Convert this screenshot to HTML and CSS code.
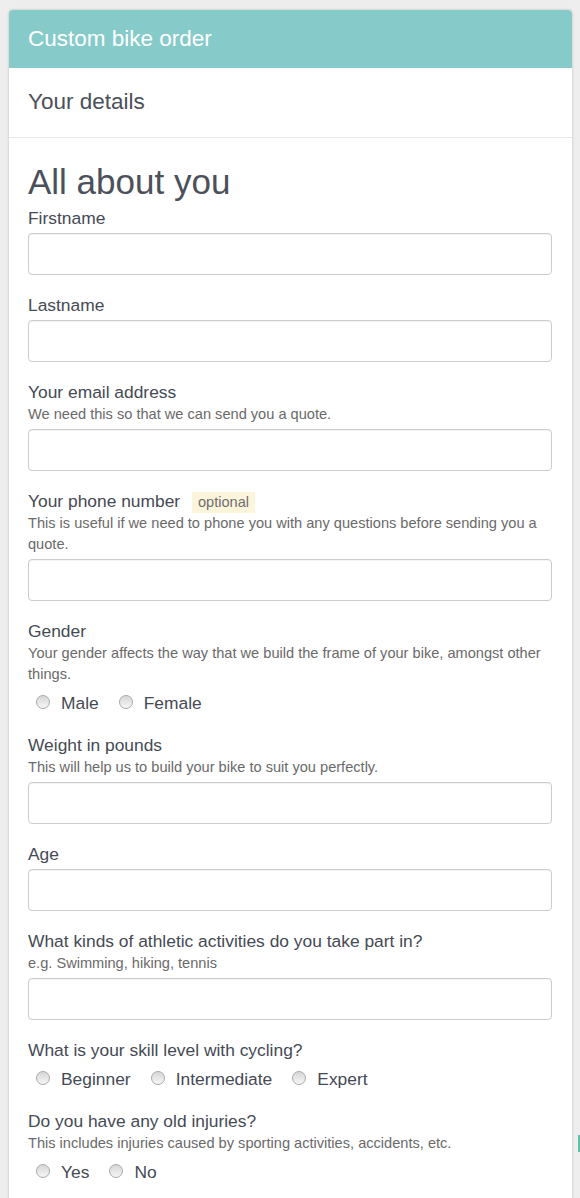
FILE: index.html
```html
<!DOCTYPE html>
<html lang="en">
<head>
<meta charset="utf-8">
<title>Custom bike order</title>
<link rel="stylesheet" href="styles.css">
</head>
<body>
<div class="card">
  <div class="card-header">Custom bike order</div>
  <div class="step-title">Your details</div>
  <form class="card-body">
    <h1 class="section-title">All about you</h1>

    <div class="group">
      <label class="label">Firstname</label>
      <input class="input" type="text">
    </div>

    <div class="group">
      <label class="label">Lastname</label>
      <input class="input" type="text">
    </div>

    <div class="group">
      <label class="label">Your email address</label>
      <p class="help">We need this so that we can send you a quote.</p>
      <input class="input" type="text">
    </div>

    <div class="group">
      <label class="label">Your phone number <span class="badge">optional</span></label>
      <p class="help">This is useful if we need to phone you with any questions before sending you a quote.</p>
      <input class="input" type="text">
    </div>

    <div class="group">
      <label class="label">Gender</label>
      <p class="help">Your gender affects the way that we build the frame of your bike, amongst other things.</p>
      <div class="radios">
        <label class="radio"><input type="radio" name="gender"><span>Male</span></label>
        <label class="radio"><input type="radio" name="gender"><span>Female</span></label>
      </div>
    </div>

    <div class="group">
      <label class="label">Weight in pounds</label>
      <p class="help">This will help us to build your bike to suit you perfectly.</p>
      <input class="input" type="text">
    </div>

    <div class="group">
      <label class="label">Age</label>
      <input class="input" type="text">
    </div>

    <div class="group">
      <label class="label">What kinds of athletic activities do you take part in?</label>
      <p class="help">e.g. Swimming, hiking, tennis</p>
      <input class="input" type="text">
    </div>

    <div class="group">
      <label class="label">What is your skill level with cycling?</label>
      <div class="radios">
        <label class="radio"><input type="radio" name="skill"><span>Beginner</span></label>
        <label class="radio"><input type="radio" name="skill"><span>Intermediate</span></label>
        <label class="radio"><input type="radio" name="skill"><span>Expert</span></label>
      </div>
    </div>

    <div class="group">
      <label class="label">Do you have any old injuries?</label>
      <p class="help">This includes injuries caused by sporting activities, accidents, etc.</p>
      <div class="radios">
        <label class="radio"><input type="radio" name="injuries"><span>Yes</span></label>
        <label class="radio"><input type="radio" name="injuries"><span>No</span></label>
      </div>
    </div>
  </form>
</div>
<div class="side-tab"></div>
</body>
</html>
```

FILE: styles.css
```css
html, body {
  margin: 0;
  padding: 0;
}
body {
  background: #eeeeee;
  font-family: "Liberation Sans", Arial, sans-serif;
  color: #454a54;
  padding: 10px 8px 0 9px;
  overflow: hidden;
}
.card {
  width: 563px;
  background: #ffffff;
  border-radius: 4px 4px 0 0;
  box-shadow: 0 0 3px rgba(0, 0, 0, 0.22);
}
.card-header {
  background: #86cbca;
  color: #ffffff;
  height: 58px;
  box-sizing: border-box;
  padding: 0 19px;
  font-size: 22.5px;
  line-height: 58px;
  border-radius: 4px 4px 0 0;
}
.step-title {
  height: 70px;
  box-sizing: border-box;
  border-bottom: 1px solid #e6e6e6;
  padding: 0 19px;
  font-size: 22.5px;
  line-height: 68px;
  color: #4b505a;
}
.card-body {
  padding: 25px 20px 20px 19px;
  margin: 0;
}
.section-title {
  margin: 0 0 5px;
  font-size: 35px;
  font-weight: normal;
  line-height: 38px;
  color: #4b505a;
}
.group {
  margin-bottom: 18px;
}
.label {
  display: block;
  font-size: 17.4px;
  line-height: 24px;
  margin-bottom: 3px;
}
.label + .help {
  margin-top: -3px;
}
.badge {
  display: inline-block;
  background: #fcf5dc;
  color: #6f6f6f;
  font-size: 14.6px;
  line-height: 21px;
  padding: 0 6px;
  margin-left: 7px;
  vertical-align: 0;
}
.help {
  margin: 0 0 4px;
  font-size: 14.6px;
  line-height: 21px;
  color: #6a6a6a;
}
.input {
  display: block;
  box-sizing: border-box;
  width: 100%;
  height: 42px;
  margin: 0;
  border: 1px solid #cccccc;
  border-radius: 4px;
  background: #ffffff;
  box-shadow: inset 0 1px 1px rgba(0, 0, 0, 0.05);
  font-family: inherit;
  font-size: 16px;
}
.radios {
  display: flex;
  gap: 20px;
  padding: 2px 0 0 8px;
  height: 24px;
  align-items: center;
}
.radio {
  display: flex;
  align-items: center;
  gap: 11px;
  font-size: 17.4px;
  line-height: 24px;
}
.radio input {
  appearance: none;
  -webkit-appearance: none;
  width: 14px;
  height: 14px;
  margin: 0 0 2px;
  border: 1px solid #a9a9a9;
  border-radius: 50%;
  background: linear-gradient(#d6d6d6, #f6f6f6);
  box-sizing: border-box;
}
.side-tab {
  position: fixed;
  right: 0;
  top: 1135px;
  width: 2px;
  height: 17px;
  background: #63bfa9;
}
```
